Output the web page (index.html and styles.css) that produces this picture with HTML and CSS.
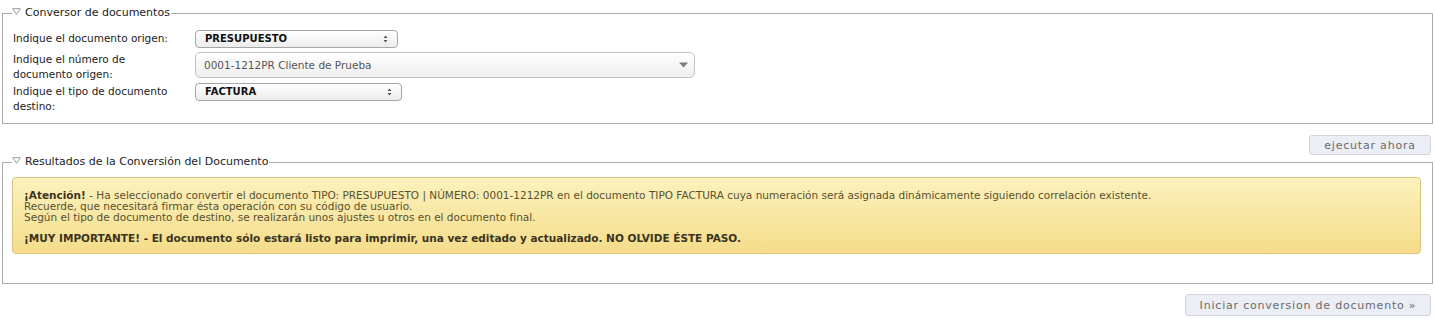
FILE: index.html
```html
<!DOCTYPE html>
<html lang="es">
<head>
  <meta charset="UTF-8" />
  <title>Conversor de documentos</title>
  <link rel="stylesheet" href="styles.css">
</head>
<body>

  <!-- Conversor -->
  <fieldset class="bloque conversor">
    <legend><svg class="flecha" width="9" height="7" viewBox="0 0 9 7"><path d="M0.7 0.7 H8.3 L4.5 6.3 Z" fill="none" stroke="#9a9a9a" stroke-width="1"/></svg>Conversor de documentos</legend>

    <div class="fila fila-1">
      <label>Indique el documento origen:</label>
      <div class="combo combo-corto">
        <span>PRESUPUESTO</span>
        <svg class="flechas" width="5" height="8" viewBox="0 0 5 8"><path d="M2.5 0.5 L4.5 3 H0.5 Z M2.5 7.5 L4.5 5 H0.5 Z" fill="#555"/></svg>
      </div>
    </div>

    <div class="fila fila-2">
      <label>Indique el número de documento origen:</label>
      <div class="combo combo-largo">
        <span>0001-1212PR Cliente de Prueba</span>
        <svg class="triangulo" width="9" height="6" viewBox="0 0 9 6"><path d="M0 0.5 H9 L4.5 5.5 Z" fill="#7a7a7a"/></svg>
      </div>
    </div>

    <div class="fila fila-3">
      <label>Indique el tipo de documento destino:</label>
      <div class="combo combo-medio">
        <span>FACTURA</span>
        <svg class="flechas" width="5" height="8" viewBox="0 0 5 8"><path d="M2.5 0.5 L4.5 3 H0.5 Z M2.5 7.5 L4.5 5 H0.5 Z" fill="#555"/></svg>
      </div>
    </div>
  </fieldset>

  <div class="acciones acciones-1">
    <button class="boton">ejecutar ahora</button>
  </div>

  <!-- Resultados -->
  <fieldset class="bloque resultados">
    <legend><svg class="flecha" width="9" height="7" viewBox="0 0 9 7"><path d="M0.7 0.7 H8.3 L4.5 6.3 Z" fill="none" stroke="#9a9a9a" stroke-width="1"/></svg>Resultados de la Conversión del Documento</legend>

    <div class="aviso">
      <p><strong>¡Atención!</strong> - Ha seleccionado convertir el documento TIPO: PRESUPUESTO | NÚMERO: 0001-1212PR en el documento TIPO FACTURA cuya numeración será asignada dinámicamente siguiendo correlación existente.<br>
      Recuerde, que necesitará firmar ésta operación con su código de usuario.<br>
      Según el tipo de documento de destino, se realizarán unos ajustes u otros en el documento final.</p>
      <p><strong>¡MUY IMPORTANTE! - El documento sólo estará listo para imprimir, una vez editado y actualizado. NO OLVIDE ÉSTE PASO.</strong></p>
    </div>
  </fieldset>

  <div class="acciones acciones-2">
    <button class="boton boton-grande">Iniciar conversion de documento »</button>
  </div>

</body>
</html>
```

FILE: styles.css
```css
body {
  font-family: "DejaVu Sans", Verdana, sans-serif;
  font-size: 10.5px;
  color: #222;
  background-color: #fff;
  margin: 0;
}
.bloque {
  margin: 0 2px;
  border: 1px solid #ababab;
  padding: 0 11px 0 9px;
}
.bloque legend {
  font-size: 11px;
  line-height: 14px;
  padding: 0 1px 0 0;
  color: #222;
}
.flecha {
  margin-right: 4px;
  vertical-align: 1px;
}
.conversor {
  margin-top: 6px;
  padding-top: 10px;
  padding-bottom: 9px;
}
.fila {
  display: flex;
  align-items: flex-start;
}
.fila label {
  width: 172px;
  margin-right: 10px;
  padding-left: 1px;
  line-height: 15px;
}
.fila-1 {
  margin-bottom: 4px;
}
.fila-1 label {
  padding-top: 1px;
}
.fila-2 {
  margin-bottom: 1px;
}
.fila-3 label {
  padding-top: 1px;
}

/* selects */
.combo {
  position: relative;
  box-sizing: border-box;
  border: 1px solid #a6a6a6;
  border-radius: 4px;
  background: linear-gradient(#ffffff, #ececec);
  font-weight: bold;
  font-size: 10px;
  color: #111;
  height: 18px;
  line-height: 16px;
  padding-left: 9px;
}
.combo-corto {
  width: 203px;
}
.combo-medio {
  width: 207px;
}
.combo-largo {
  width: 500px;
  height: 26px;
  line-height: 24px;
  border-color: #c4c4c4;
  border-radius: 5px;
  background: linear-gradient(#ffffff, #eeeeee);
  font-weight: normal;
  font-size: 10.5px;
  color: #555;
  padding-left: 8px;
}
.flechas {
  position: absolute;
  right: 9px;
  top: 4px;
}
.triangulo {
  position: absolute;
  right: 6px;
  top: 9px;
}

/* botones */
.acciones {
  display: flex;
  justify-content: flex-end;
  margin-right: 4px;
}
.acciones-1 {
  margin-top: 11px;
}
.acciones-2 {
  margin-top: 10px;
}
.boton {
  font-family: "DejaVu Sans", Verdana, sans-serif;
  font-size: 11px;
  letter-spacing: 0.8px;
  color: #6a6a6a;
  background-color: #eceef6;
  border: 1px solid #d2d4de;
  border-radius: 3px;
  width: 122px;
  height: 20px;
  padding: 0;
  cursor: pointer;
}
.boton-grande {
  width: 246px;
  height: 22px;
}

/* aviso */
.resultados {
  padding-top: 8px;
  padding-bottom: 29px;
}
.aviso {
  box-sizing: border-box;
  height: 77px;
  border: 1px solid #d9c37c;
  border-radius: 4px;
  background: linear-gradient(#fcf2bd, #f4dc8a);
  padding: 12px 11px 0 11px;
  color: #5a5030;
  line-height: 11px;
}
.aviso p {
  margin: 0 0 10px;
}
.aviso strong {
  color: #3b3320;
}
```
